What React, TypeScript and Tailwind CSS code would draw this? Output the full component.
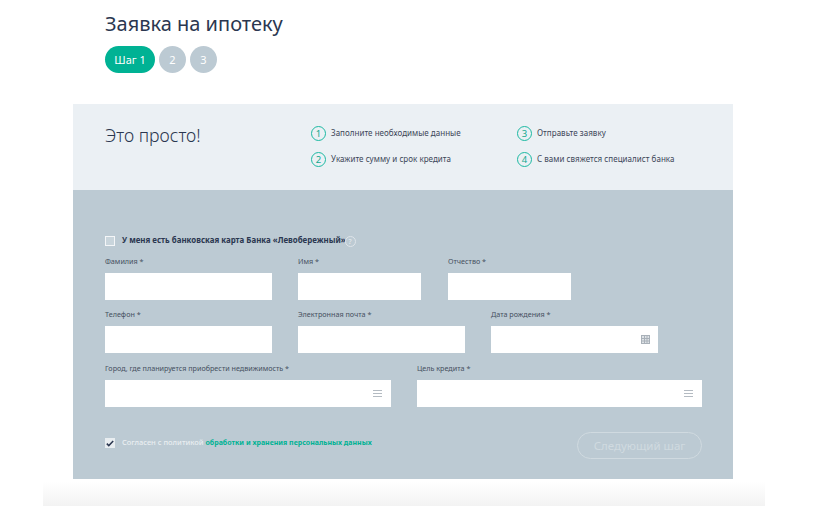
const font = { fontFamily: '"Noto Sans", "Open Sans", sans-serif' };

function Step({ n, text }: { n: number; text: string }) {
  return (
    <div className="flex items-center h-[15px]">
      <div className="w-[15px] h-[15px] rounded-full border border-[#1bb9a2] flex items-center justify-center text-[9.5px] leading-none text-[#12a88f] shrink-0">
        {n}
      </div>
      <span className="ml-[5px] mb-[2px] text-[8px] tracking-[0.03px] leading-none text-[#3c4658] whitespace-nowrap">{text}</span>
    </div>
  );
}

function Field({ label, width, icon }: { label: string; width: string; icon?: "calendar" | "menu" }) {
  return (
    <div className={`flex flex-col ${width}`}>
      <label className="h-[12px] mb-[6px] text-[7.2px] leading-[12px] text-[#46505f] whitespace-nowrap">{label}</label>
      <div className="h-[27px] bg-white flex items-center justify-end pr-[8px]">
        {icon === "calendar" && (
          <svg width="9" height="9" viewBox="0 0 9 9" fill="none" stroke="#a9b1b9" strokeWidth="1">
            <rect x="0.5" y="0.5" width="8" height="8" fill="#dfe3e7" />
            <path d="M0 3.5H9M0 6H9M3.5 0V9M6 0V9" />
          </svg>
        )}
        {icon === "menu" && (
          <svg width="9" height="7" viewBox="0 0 9 7" fill="none" stroke="#b4bbc2" strokeWidth="1" className="mr-[1px]">
            <path d="M0 .5H9M0 3.5H9M0 6.5H9" />
          </svg>
        )}
      </div>
    </div>
  );
}

export default function App() {
  return (
    <div className="w-[825px] h-[507px] bg-white overflow-hidden relative" style={font}>
      <div className="pl-[105px] pt-[9px] h-[104px]">
        <h1 className="text-[20px] leading-[30px] text-[#2b3750] font-normal">Заявка на ипотеку</h1>
        <div className="flex gap-[4px] mt-[7px]">
          <div className="w-[50px] h-[27px] pt-px rounded-full bg-[#00b294] text-white text-[11px] flex items-center justify-center">Шаг 1</div>
          <div className="w-[27px] h-[27px] pt-px rounded-full bg-[#bccad3] text-white text-[11px] flex items-center justify-center">2</div>
          <div className="w-[27px] h-[27px] pt-px rounded-full bg-[#bccad3] text-white text-[11px] flex items-center justify-center">3</div>
        </div>
      </div>

      <div className="ml-[73px] w-[660px]">
        <div className="h-[86px] bg-[#ebf0f4] flex pl-[32px] pt-[21px]">
          <div className="w-[206px] text-[17.7px] font-light leading-[20px] text-[#2b3750]">Это просто!</div>
          <div className="flex flex-col gap-[11px] pt-[1px] w-[206px]">
            <Step n={1} text="Заполните необходимые данные" />
            <Step n={2} text="Укажите сумму и срок кредита" />
          </div>
          <div className="flex flex-col gap-[11px] pt-[1px]">
            <Step n={3} text="Отправьте заявку" />
            <Step n={4} text="С вами свяжется специалист банка" />
          </div>
        </div>

        <div className="h-[289px] bg-[#bccad3] pl-[32px] pt-[46px]">
          <div className="flex items-center h-[10px]">
            <div className="w-[10px] h-[10px] bg-[#c9d5dc] border border-[#f4f6f8]" />
            <span className="ml-[7px] text-[7.9px] font-bold text-[#2b3750] whitespace-nowrap">У меня есть банковская карта Банка «Левобережный»</span>
            <span className="ml-[-1px] w-[11px] h-[11px] rounded-full border border-[#dfe5ea] text-[7px] leading-none text-[#e8edf0] flex items-center justify-center">?</span>
          </div>

          <div className="flex mt-[9px]">
            <Field label="Фамилия *" width="w-[167px]" />
            <div className="ml-[26px]"><Field label="Имя *" width="w-[123px]" /></div>
            <div className="ml-[27px]"><Field label="Отчество *" width="w-[123px]" /></div>
          </div>
          <div className="flex mt-[8px]">
            <Field label="Телефон *" width="w-[167px]" />
            <div className="ml-[26px]"><Field label="Электронная почта *" width="w-[167px]" /></div>
            <div className="ml-[26px]"><Field label="Дата рождения *" width="w-[167px]" icon="calendar" /></div>
          </div>
          <div className="flex mt-[9px]">
            <Field label="Город, где планируется приобрести недвижимость *" width="w-[286px]" icon="menu" />
            <div className="ml-[26px]"><Field label="Цель кредита *" width="w-[285px]" icon="menu" /></div>
          </div>

          <div className="flex items-center mt-[25px] h-[27px] w-[597px]">
            <div className="flex items-center mb-[5px]">
              <div className="w-[10px] h-[10px] bg-[#e8edf0] flex items-center justify-center">
                <svg width="8" height="7" viewBox="0 0 8 7" fill="none" stroke="#2b3750" strokeWidth="1.5">
                  <path d="M.8 3.6 2.8 5.6 7.2 1" />
                </svg>
              </div>
              <span className="ml-[7px] text-[7.5px] font-medium text-[#e9eef1] whitespace-nowrap">
                Согласен с политикой <span className="text-[7px] font-bold text-[#00b294]">обработки и хранения персональных данных</span>
              </span>
            </div>
            <div className="ml-auto w-[125px] h-[27px] rounded-full border border-[#d0dae0] text-[#d0dae0] text-[11.5px] flex items-center justify-center">
              Следующий шаг
            </div>
          </div>
        </div>
      </div>

      <div className="ml-[43px] mt-[3px] w-[722px] h-[24px] bg-gradient-to-b from-white to-[#f3f3f3]" />
    </div>
  );
}
